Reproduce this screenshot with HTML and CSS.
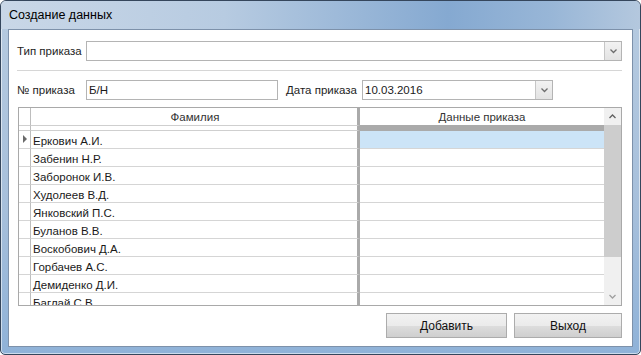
FILE: index.html
```html
<!DOCTYPE html>
<html lang="ru">
<head>
  <meta charset="UTF-8">
  <title>Создание данных</title>
  <link rel="stylesheet" href="styles.css">
</head>
<body>
<div class="window">
  <div class="titlebar">Создание данных</div>

  <div class="client">
    <div class="field-row">
      <label class="field-label">Тип приказа</label>
      <div class="combo combo-wide">
        <span class="combo-text"></span>
        <span class="combo-btn">
          <svg width="7" height="5" viewBox="0 0 7 5"><path d="M0.5 0.5 L3.5 3.5 L6.5 0.5" fill="none" stroke="#6d6d6d" stroke-width="1.3"/></svg>
        </span>
      </div>
    </div>

    <div class="separator"></div>

    <div class="field-row">
      <label class="field-label">№ приказа</label>
      <div class="textbox">Б/Н</div>
      <label class="field-label date-label">Дата приказа</label>
      <div class="combo combo-date">
        <span class="combo-text">10.03.2016</span>
        <span class="combo-btn">
          <svg width="7" height="5" viewBox="0 0 7 5"><path d="M0.5 0.5 L3.5 3.5 L6.5 0.5" fill="none" stroke="#6d6d6d" stroke-width="1.3"/></svg>
        </span>
      </div>
    </div>

    <div class="grid">
      <div class="grid-body">
        <div class="grid-head">
          <div class="cell ind"></div>
          <div class="cell c1">Фамилия</div>
          <div class="cell c2">Данные приказа</div>
        </div>
        <div class="grid-band">
          <div class="band ind"></div>
          <div class="band c1"></div>
          <div class="band c2"></div>
        </div>
        <div class="grid-row current">
          <div class="cell ind"><span class="arrow"></span></div>
          <div class="cell c1">Еркович А.И.</div>
          <div class="cell c2 selected"></div>
        </div>
        <div class="grid-row">
          <div class="cell ind"></div>
          <div class="cell c1">Забенин Н.Р.</div>
          <div class="cell c2"></div>
        </div>
        <div class="grid-row">
          <div class="cell ind"></div>
          <div class="cell c1">Заборонок И.В.</div>
          <div class="cell c2"></div>
        </div>
        <div class="grid-row">
          <div class="cell ind"></div>
          <div class="cell c1">Худолеев В.Д.</div>
          <div class="cell c2"></div>
        </div>
        <div class="grid-row">
          <div class="cell ind"></div>
          <div class="cell c1">Янковский П.С.</div>
          <div class="cell c2"></div>
        </div>
        <div class="grid-row">
          <div class="cell ind"></div>
          <div class="cell c1">Буланов В.В.</div>
          <div class="cell c2"></div>
        </div>
        <div class="grid-row">
          <div class="cell ind"></div>
          <div class="cell c1">Воскобович Д.А.</div>
          <div class="cell c2"></div>
        </div>
        <div class="grid-row">
          <div class="cell ind"></div>
          <div class="cell c1">Горбачев А.С.</div>
          <div class="cell c2"></div>
        </div>
        <div class="grid-row">
          <div class="cell ind"></div>
          <div class="cell c1">Демиденко Д.И.</div>
          <div class="cell c2"></div>
        </div>
        <div class="grid-row">
          <div class="cell ind"></div>
          <div class="cell c1">Баглай С.В.</div>
          <div class="cell c2"></div>
        </div>
      </div>

      <div class="scrollbar">
        <div class="sb-btn">
          <svg width="7" height="5" viewBox="0 0 7 5"><path d="M0.5 4 L3.5 1 L6.5 4" fill="none" stroke="#606060" stroke-width="1.3"/></svg>
        </div>
        <div class="sb-thumb"></div>
        <div class="sb-track"></div>
        <div class="sb-btn">
          <svg width="7" height="5" viewBox="0 0 7 5"><path d="M0.5 1 L3.5 4 L6.5 1" fill="none" stroke="#a0a0a0" stroke-width="1.3"/></svg>
        </div>
      </div>
    </div>

    <div class="buttons">
      <button class="button">Добавить</button>
      <button class="button">Выход</button>
    </div>
  </div>
</div>
</body>
</html>
```

FILE: styles.css
```css
* {
  margin: 0;
  padding: 0;
  box-sizing: border-box;
}

body {
  background: #fff;
  font-family: 'Liberation Sans', Arial, sans-serif;
  font-size: 11.5px;
  color: #1a1a1a;
}

.window {
  width: 641px;
  height: 355px;
  border: 1px solid #35465c;
  border-radius: 6px 6px 5px 5px;
  background: linear-gradient(to bottom, #b7cbe0 0%, #a6bfdb 60%, #8fb2d8 100%);
  box-shadow: inset 0 0 0 1px rgba(255, 255, 255, 0.55);
  padding: 0 7px 7px 7px;
  display: flex;
  flex-direction: column;
}

.titlebar {
  height: 28px;
  margin: 0 -7px;
  padding: 0 8px;
  display: flex;
  align-items: center;
  font-family: 'Liberation Sans', Arial, sans-serif;
  font-size: 12.5px;
  color: #000;
  border-radius: 5px 5px 0 0;
  background: linear-gradient(to right, #c9d7e7 0%, #b7cbe1 35%, #85a9d1 70%, #98b6d7 86%, #b4c8de 100%);
}

.client {
  flex: 1;
  background: #fff;
  border: 1px solid #7d91aa;
  padding: 11px 10px 0 8px;
  display: flex;
  flex-direction: column;
}

.field-row {
  display: flex;
  align-items: center;
  height: 20px;
}

.field-label {
  width: 69px;
  color: #1e1e1e;
}

.date-label {
  width: 76px;
  margin-left: 8px;
}

.combo,
.textbox {
  height: 20px;
  border: 1px solid #b4b4b4;
  display: flex;
  align-items: center;
  background: #fff;
}

.combo-wide {
  flex: 1;
}

.combo-date {
  width: 191px;
}

.textbox {
  width: 192px;
  padding-left: 2px;
}

.combo-text {
  flex: 1;
  padding-left: 2px;
}

.combo-btn {
  width: 17px;
  height: 100%;
  border-left: 1px solid #c6c6c6;
  background: linear-gradient(#f2f2f2, #e3e3e3);
  display: flex;
  align-items: center;
  justify-content: center;
}

.separator {
  height: 1px;
  background: #d6d6d6;
  margin: 9px 0 9px 0;
}

.grid {
  margin: 7px 0 0 1px;
  height: 199px;
  border: 1px solid #a9a9a9;
  display: flex;
  overflow: hidden;
}

.grid-body {
  flex: 1;
  overflow: hidden;
}

.grid-head,
.grid-band,
.grid-row {
  display: flex;
}

.cell {
  height: 18px;
  display: flex;
  align-items: center;
  padding-top: 2px;
  border-bottom: 1px solid #d5d5d5;
  white-space: nowrap;
}

.grid-head .cell {
  height: 17px;
  padding-top: 1px;
  border-bottom: none;
  justify-content: center;
  color: #333;
}

.ind {
  width: 12px;
  border-right: 1px solid #bdbdbd;
  justify-content: center;
}

.c1 {
  width: 329px;
  padding-left: 2px;
  border-right: 3px solid #aaaaaa;
}

.c2 {
  flex: 1;
}

.band {
  height: 6px;
  border-top: 1px solid #cfcfcf;
  border-bottom: 1px solid #cfcfcf;
}

.band.c2 {
  background: #aaaaaa;
  border-color: #aaaaaa;
}

.selected {
  background: #cce4f7;
}

.arrow {
  width: 0;
  height: 0;
  border-top: 4px solid transparent;
  border-bottom: 4px solid transparent;
  border-left: 4px solid #6a6a6a;
  margin-left: 1px;
  margin-top: -3px;
}

.scrollbar {
  width: 17px;
  background: #f0f0f0;
  display: flex;
  flex-direction: column;
}

.sb-btn {
  height: 17px;
  display: flex;
  align-items: center;
  justify-content: center;
}

.sb-thumb {
  height: 132px;
  background: #cdcdcd;
}

.sb-track {
  flex: 1;
}

.buttons {
  display: flex;
  justify-content: flex-end;
  gap: 7px;
  margin-top: 7px;
}

.button {
  width: 121px;
  height: 25px;
  border: 1px solid #acacac;
  background: linear-gradient(#f2f2f2 0%, #ebebeb 50%, #dddddd 51%, #cfcfcf 100%);
  font-family: 'Liberation Sans', Arial, sans-serif;
  font-size: 12px;
  color: #111;
}

.button + .button {
  width: 108px;
}
```
